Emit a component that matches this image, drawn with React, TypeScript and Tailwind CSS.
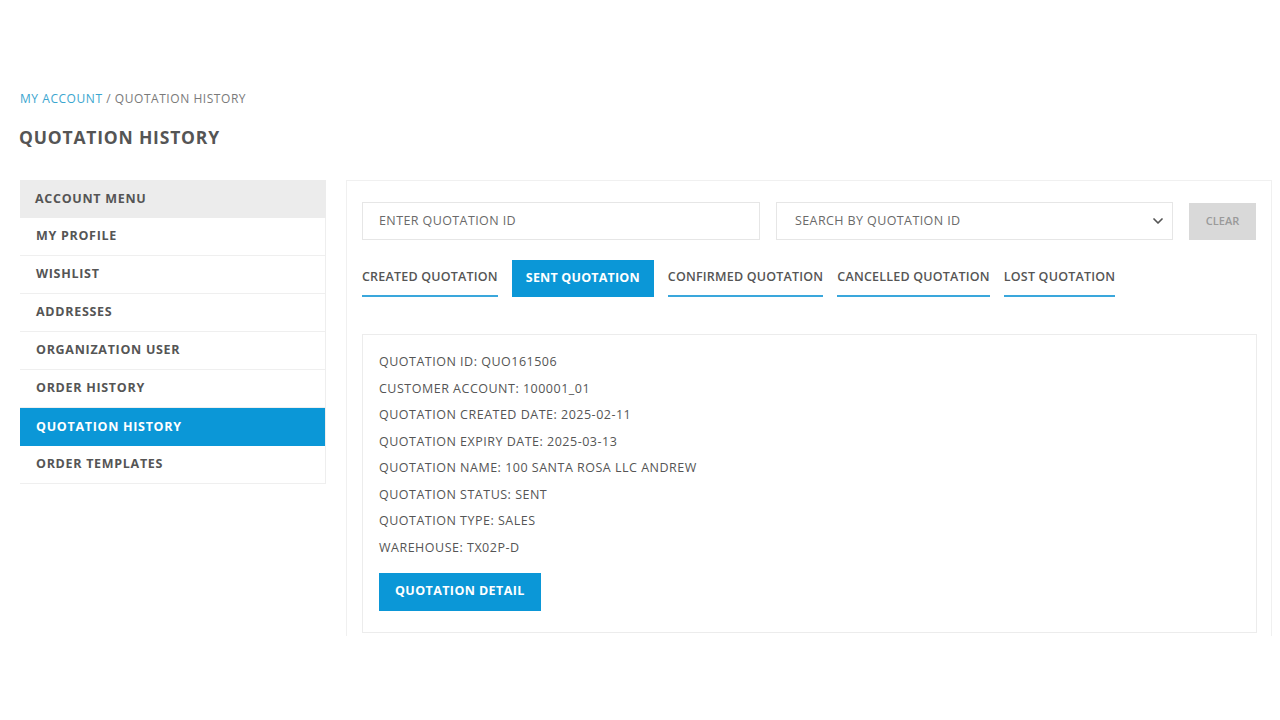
// App.tsx

const menu = [
  "MY PROFILE",
  "WISHLIST",
  "ADDRESSES",
  "ORGANIZATION USER",
  "ORDER HISTORY",
  "QUOTATION HISTORY",
  "ORDER TEMPLATES",
];

const tabs = [
  "CREATED QUOTATION",
  "SENT QUOTATION",
  "CONFIRMED QUOTATION",
  "CANCELLED QUOTATION",
  "LOST QUOTATION",
];

const details = [
  ["QUOTATION ID", "QUO161506"],
  ["CUSTOMER ACCOUNT", "100001_01"],
  ["QUOTATION CREATED DATE", "2025-02-11"],
  ["QUOTATION EXPIRY DATE", "2025-03-13"],
  ["QUOTATION NAME", "100 SANTA ROSA LLC ANDREW"],
  ["QUOTATION STATUS", "SENT"],
  ["QUOTATION TYPE", "SALES"],
  ["WAREHOUSE", "TX02P-D"],
];

export default function App() {
  return (
    <div
      className="w-[1280px] h-[720px] bg-white text-[#555] overflow-hidden"
      style={{ fontFamily: '"Open Sans", "Liberation Sans", sans-serif' }}
    >
      {/* BREADCRUMB + TITLE */}
      <div className="pt-[91px] pl-[20px]">
        <div className="text-[12px] leading-[16px] tracking-[0.55px]">
          <span className="text-[#3ba6cf]">MY ACCOUNT</span>
          <span className="text-[#7a7a7a]"> / QUOTATION HISTORY</span>
        </div>
        <h1 className="mt-[18px] -ml-[1px] text-[17.5px] leading-[24px] font-bold text-[#555] tracking-[0.8px]">
          QUOTATION HISTORY
        </h1>
      </div>

      <div className="flex mt-[31px] pl-[20px]">
        {/* SIDEBAR */}
        <div className="w-[306px] shrink-0">
          <div className="h-[38px] bg-[#ececec] flex items-center pl-[15px] text-[12.5px] font-bold tracking-[0.7px] text-[#555]">
            ACCOUNT MENU
          </div>
          <div className="border-r border-[#eeeeee]">
            {menu.map((item) => {
              const active = item === "QUOTATION HISTORY";
              return (
                <div
                  key={item}
                  className={
                    active
                      ? "h-[38px] bg-[#0b97d7] flex items-center pl-[16px] text-[12.5px] font-bold tracking-[0.7px] text-white"
                      : "h-[38px] bg-white border-b border-[#efefef] flex items-center pl-[16px] text-[12.5px] font-bold tracking-[0.7px] text-[#555]"
                  }
                >
                  {item}
                </div>
              );
            })}
          </div>
        </div>

        {/* MAIN PANEL */}
        <div className="ml-[20px] w-[926px] h-[456px] border-l border-t border-r border-[#f0f0f0] pt-[21px] pl-[15px] pr-[14px]">
          {/* FILTERS */}
          <div className="flex items-center">
            <div className="w-[398px] h-[38px] border border-[#e6e6e6] flex items-center pl-[16px] text-[12.5px] tracking-[0.4px] text-[#6a6a6a]">
              ENTER QUOTATION ID
            </div>
            <div className="ml-[16px] w-[397px] h-[38px] border border-[#e6e6e6] flex items-center justify-between pl-[18px] pr-[6px] text-[12.5px] tracking-[0.4px] text-[#6a6a6a]">
              <span>SEARCH BY QUOTATION ID</span>
              <svg width="16" height="16" viewBox="0 0 24 24" fill="none" stroke="#555" strokeWidth="2.6" strokeLinecap="round" strokeLinejoin="round">
                <path d="M6 9l6 6 6-6" />
              </svg>
            </div>
            <button
              type="button"
              className="ml-[16px] w-[67px] h-[37px] bg-[#d9d9d9] text-[11px] font-semibold text-[#9a9a9a]"
            >
              CLEAR
            </button>
          </div>

          {/* TABS */}
          <div className="flex mt-[20px] gap-[14px]">
            {tabs.map((tab) => {
              const active = tab === "SENT QUOTATION";
              return active ? (
                <div
                  key={tab}
                  className="h-[37px] px-[14px] bg-[#0b97d7] text-white flex items-center text-[12.5px] font-bold tracking-[0.2px]"
                >
                  {tab}
                </div>
              ) : (
                <div
                  key={tab}
                  className="h-[37px] flex items-center text-[12.5px] font-semibold tracking-[0.2px] text-[#555] border-b-2 border-[#3aa7dc]"
                >
                  {tab}
                </div>
              );
            })}
          </div>

          {/* CARD */}
          <div className="mt-[37px] w-[895px] h-[299px] border border-[#ececec] pt-[14px] pl-[16px]">
            <div className="flex flex-col">
              {details.map(([label, value]) => (
                <div
                  key={label}
                  className="h-[26.6px] flex items-center text-[12.5px] tracking-[0.5px] text-[#555]"
                >
                  {label}: {value}
                </div>
              ))}
            </div>
            <button
              type="button"
              className="mt-[11px] h-[38px] px-[16px] bg-[#0b97d7] text-white text-[12.5px] font-bold tracking-[0.4px]"
            >
              QUOTATION DETAIL
            </button>
          </div>
        </div>
      </div>
    </div>
  );
}
